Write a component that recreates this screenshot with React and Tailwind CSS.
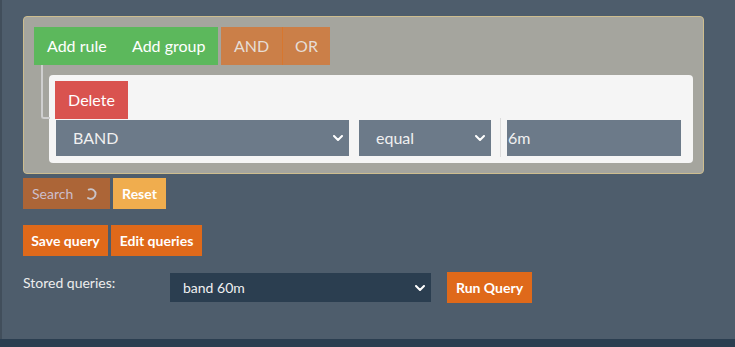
import { useState } from 'react'

function Chevron({ className = '' }) {
  return (
    <svg viewBox="0 0 10 6" className={`h-[6px] w-[10px] ${className}`} fill="none">
      <path d="M1 1l4 4 4-4" stroke="currentColor" strokeWidth="2" strokeLinecap="round" strokeLinejoin="round" />
    </svg>
  )
}

function Spinner() {
  return (
    <svg viewBox="0 0 14 14" className="h-[14px] w-[13px]" fill="none">
      <path d="M4 2.3A5.2 5.2 0 1 1 3.2 11.3" stroke="#c9c4c9" strokeWidth="2" strokeLinecap="round" />
    </svg>
  )
}

function FakeSelect({ value, className = '' }) {
  return (
    <div className={`flex h-9 items-center justify-between bg-[#6c7a89] pl-[17px] pr-[4px] text-[16px] text-[#f0f0f0] ${className}`}>
      <span>{value}</span>
      <Chevron className="mr-[2px] text-white" />
    </div>
  )
}

export default function App() {
  const [stored] = useState('band 60m')

  return (
    <div className="h-[347px] w-full overflow-hidden bg-[#2b3e50] font-['Lato',sans-serif]">
      <div className="h-[339px] border-l-[2px] border-[#414e5b] bg-[#4e5d6c] pl-[21px] pt-4">
        {/* QUERY BUILDER */}
        <div className="w-[681px] rounded-[4px] border border-[#cdbd8f] bg-[#a5a59e] p-[10px]">
          <div className="flex h-[38px] text-[16px] leading-none">
            <div className="flex bg-[#5cb85c] text-white">
              <button className="w-[85px] pl-[13px] text-left">Add rule</button>
              <button className="w-[99px] pl-[13px] text-left">Add group</button>
            </div>
            <div className="ml-[3px] flex bg-[#cb7f48] text-[#e6ddd6]">
              <button className="w-[61px]">AND</button>
              <button className="w-[48px] border-l border-[#d7772f]">OR</button>
            </div>
          </div>

          <div className="relative mt-[10px] ml-[15px] rounded-[4px] bg-[#f5f5f5] pt-[6px] pb-[7px] pl-[6px] pr-[12px]">
            {/* connector line */}
            <div className="absolute -top-[10px] -left-[8px] h-[54px] w-[9px] rounded-bl-[3px] border-b-2 border-l-2 border-[#cfcfcf]" />
            <button className="block h-[38px] w-[73px] bg-[#d9534f] text-[16px] leading-none text-white">Delete</button>
            <div className="mt-px flex h-9 items-start">
              <FakeSelect value="BAND" className="ml-px w-[293px]" />
              <FakeSelect value="equal" className="ml-[10px] w-[132px]" />
              <div className="-mt-[2px] ml-[9px] h-[39px] w-px bg-[#dcdcdc]" />
              <div className="ml-[6px] flex h-9 flex-1 items-center bg-[#6c7a89] pl-px text-[16px] text-[#f0f0f0]">
                6m
              </div>
            </div>
          </div>
        </div>

        {/* ACTIONS */}
        <div className="mt-[4px] flex gap-[3px] text-[14px] leading-none">
          <button className="flex h-[31px] w-[87px] items-center gap-[12px] bg-[#ac6537] pl-[9px] text-[#cdbfcb]">
            Search
            <Spinner />
          </button>
          <button className="h-[31px] w-[53px] bg-[#f0ad4e] font-bold text-white">Reset</button>
        </div>

        <div className="mt-4 flex gap-[3px] text-[14px] font-bold leading-none text-white">
          <button className="h-[31px] w-[85px] bg-[#df691a]">Save query</button>
          <button className="h-[31px] w-[91px] bg-[#df691a]">Edit queries</button>
        </div>

        <div className="mt-4 flex items-start">
          <span className="w-[147px] text-[14px] text-[#ededed]">Stored queries:</span>
          <div className="mt-px flex h-[29px] w-[261px] items-center justify-between bg-[#2b3e50] pl-[13px] pr-[5px] text-[14px] text-[#f0f0f0]">
            <span>{stored}</span>
            <Chevron className="mr-px text-white" />
          </div>
          <button className="ml-4 h-[31px] w-[85px] bg-[#df691a] text-[14px] font-bold leading-none text-white">Run Query</button>
        </div>
      </div>
    </div>
  )
}
